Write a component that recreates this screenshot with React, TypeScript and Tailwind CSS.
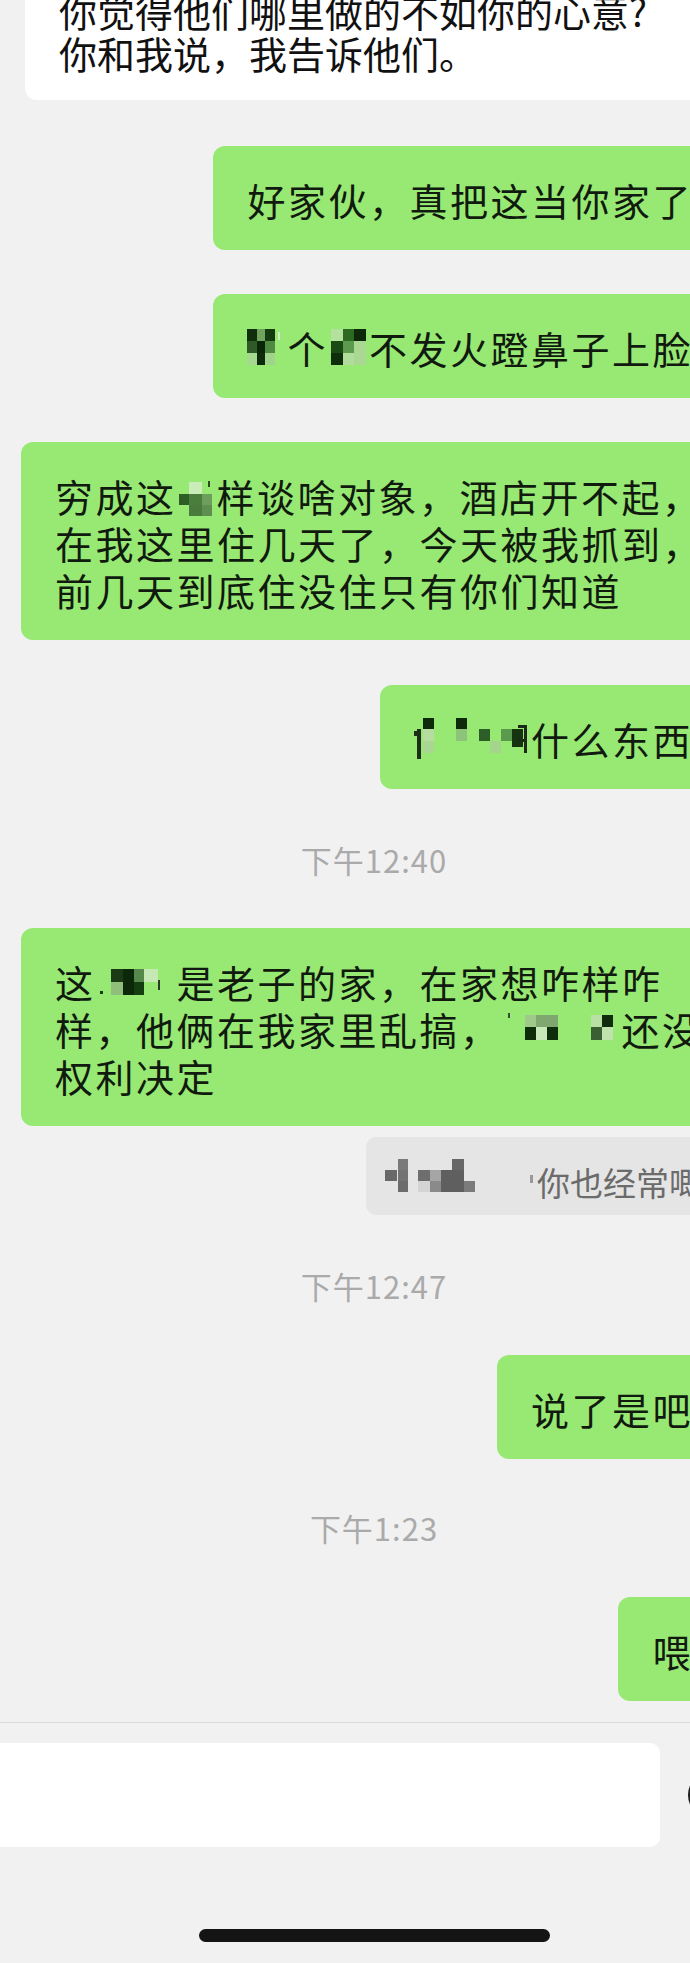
import React from "react";

type Cell = [number, number, number, number, string];

function Mosaic({ w, h, cells }: { w: number; h: number; cells: Cell[] }) {
  return (
    <svg width={w} height={h} viewBox={`0 0 ${w} ${h}`} className="inline-block align-top">
      {cells.map(([x, y, cw, ch, c], i) => (
        <rect key={i} x={x} y={y} width={cw} height={ch} fill={c} />
      ))}
    </svg>
  );
}

const bubble =
  "rounded-[12px] bg-[#98e874] px-[34px] pt-[30px] pb-[27px] text-[38px] leading-[47px] tracking-[2.5px] text-[#111a0e] whitespace-nowrap";

const stamp = "self-center text-[31px] leading-[40px] tracking-[1px] text-[#aaaaaa] whitespace-nowrap";

const m2a: Cell[] = [
  [0, 5, 10, 12, "#0f2f0c"], [10, 5, 8, 12, "#6fa35e"], [18, 5, 10, 12, "#143a10"],
  [0, 17, 10, 12, "#2f5a27"], [10, 17, 8, 12, "#0b2508"], [18, 17, 10, 12, "#4f8a42"],
  [0, 29, 10, 12, "#a6d98f"], [10, 29, 8, 12, "#0d2a0a"], [18, 29, 10, 12, "#9fd48a"],
  [31, 8, 2, 8, "#cfeebf"],
];
const m2b: Cell[] = [
  [3, 5, 12, 12, "#b5e19e"], [15, 5, 11, 12, "#2c6a22"], [26, 5, 12, 12, "#0c2a09"],
  [3, 17, 12, 12, "#1a4a14"], [15, 17, 11, 12, "#5c9a4d"], [26, 17, 12, 12, "#a8d891"],
  [3, 29, 12, 12, "#0e2e0b"], [15, 29, 11, 12, "#b0de9a"], [26, 29, 12, 12, "#a8d891"],
];
const m3: Cell[] = [
  [12, 10, 13, 12, "#c9ecb8"], [31, 9, 2, 6, "#2a4a22"],
  [2, 22, 10, 11, "#2d5e25"], [12, 22, 13, 11, "#4a7e3e"], [25, 22, 10, 11, "#6d9e5e"],
  [12, 33, 13, 11, "#4a7a3e"], [25, 33, 10, 11, "#5f8f50"],
];
const m4: Cell[] = [
  [3, 14, 4, 30, "#1d2e18"], [0, 16, 4, 5, "#1d2e18"],
  [9, 3, 11, 11, "#0e2a0b"], [9, 14, 11, 12, "#b6dc9f"], [9, 26, 11, 12, "#a9d690"],
  [42, 3, 11, 11, "#0e2a0b"], [42, 14, 11, 12, "#8ec47a"],
  [65, 14, 11, 12, "#2e5e28"], [76, 26, 11, 12, "#a5d58d"],
  [87, 14, 11, 12, "#5a9a4c"], [98, 14, 11, 18, "#15330f"],
  [104, 10, 9, 3, "#1a2a16"], [110, 10, 3, 28, "#1a2a16"], [104, 24, 8, 3, "#1a2a16"],
];
const m5a: Cell[] = [
  [4, 33, 3, 3, "#1a3a14"],
  [15, 11, 12, 13, "#1a3a14"], [15, 24, 12, 13, "#8fbf7a"],
  [27, 11, 11, 13, "#0b2808"], [27, 24, 11, 13, "#0b2808"],
  [38, 11, 10, 13, "#55884a"], [38, 24, 10, 13, "#153d10"],
  [48, 11, 14, 13, "#c5e8b4"],
  [62, 22, 2, 10, "#2a3a24"],
];
const m5b: Cell[] = [
  [7, 8, 2, 5, "#3a4a34"],
  [24, 10, 11, 12, "#9fc98a"], [35, 10, 22, 12, "#7fa870"],
  [24, 22, 11, 13, "#0e2e0b"], [35, 22, 11, 13, "#c8e8b8"], [46, 22, 11, 13, "#0e2e0b"],
  [90, 10, 11, 12, "#b9e0a5"], [101, 10, 11, 12, "#102c0c"],
  [90, 22, 11, 13, "#3a5f32"], [101, 22, 11, 13, "#c0e3ae"],
];
const mq: Cell[] = [
  [32, 22, 10, 11, "#7a7a7a"],
  [19, 33, 12, 11, "#696969"],
  [32, 33, 10, 11, "#737373"],
  [32, 44, 10, 11, "#6c6c6c"],
  [52, 33, 12, 11, "#6e6e6e"],
  [52, 44, 12, 11, "#d4d4d4"],
  [64, 33, 11, 11, "#a5a5a5"],
  [64, 44, 11, 11, "#8a8a8a"],
  [86, 22, 12, 11, "#676767"],
  [75, 33, 23, 22, "#5f5f5f"],
  [98, 44, 11, 11, "#7b7b7b"],
  [164, 38, 3, 8, "#9a9a9a"],
];

export default function App() {
  return (
    <div className="w-[690px] h-[1963px] overflow-hidden bg-[#f1f1f1] font-['Noto_Sans_CJK_SC',sans-serif]">
      <div className="w-[748px] flex flex-col px-[21px]">
        <div className="mt-[-40px] ml-[4px] rounded-[12px] bg-white px-[34px] pt-[30px] pb-[26px] text-[38px] leading-[42px] text-[#111111] whitespace-nowrap">
          你觉得他们哪里做的不如你的心意?
          <br />
          你和我说，我告诉他们。
        </div>

        <div className={`${bubble} self-end mt-[46px]`}>好家伙，真把这当你家了</div>

        <div className={`${bubble} self-end mt-[44px]`}>
          <Mosaic w={40} h={47} cells={m2a} />个<Mosaic w={41} h={47} cells={m2b} />不发火蹬鼻子上脸
        </div>

        <div className={`${bubble} mt-[44px]`}>
          穷成这<Mosaic w={40} h={47} cells={m3} />样谈啥对象，酒店开不起，
          <br />
          在我这里住几天了，今天被我抓到，
          <br />
          前几天到底住没住只有你们知道
        </div>

        <div className={`${bubble} self-end mt-[45px]`}>
          <Mosaic w={117} h={47} cells={m4} />什么东西
        </div>

        <div className={`${stamp} mt-[51px]`}>下午12:40</div>

        <div className={`${bubble} mt-[48px]`}>
          这<Mosaic w={81} h={47} cells={m5a} />是老子的家，在家想咋样咋
          <br />
          样，他俩在我家里乱搞，<Mosaic w={121} h={47} cells={m5b} />还没
          <br />
          权利决定
        </div>

        <div className="self-end mt-[11px] w-[361px] h-[78px] rounded-[10px] bg-[#e5e5e5] flex items-center overflow-hidden">
          <svg width={171} height={78} viewBox="0 0 171 78" className="shrink-0">
            {mq.map(([x, y, cw, ch, c], i) => (
              <rect key={i} x={x} y={y} width={cw} height={ch} fill={c} />
            ))}
          </svg>
          <span className="mt-[12px] text-[33px] leading-none text-[#6b6b6b] whitespace-nowrap">你也经常唧唧歪歪</span>
        </div>

        <div className={`${stamp} mt-[51px]`}>下午12:47</div>

        <div className={`${bubble} self-end mt-[49px]`}>说了是吧</div>

        <div className={`${stamp} mt-[49px]`}>下午1:23</div>

        <div className={`${bubble} self-end mt-[49px]`}>喂</div>

        <div className="mt-[21px] -mx-[21px] h-px bg-[#dadada]" />

        <div className="mt-[20px] flex items-center">
          <div className="ml-[-61px] w-[700px] h-[104px] shrink-0 rounded-[10px] bg-white" />
          <div className="ml-[28px] w-[46px] h-[46px] shrink-0 rounded-full border-[3px] border-[#1c1c1c]" />
        </div>

        <div className="mt-[82px] self-center w-[351px] h-[13px] rounded-full bg-[#141414]" />
      </div>
    </div>
  );
}
